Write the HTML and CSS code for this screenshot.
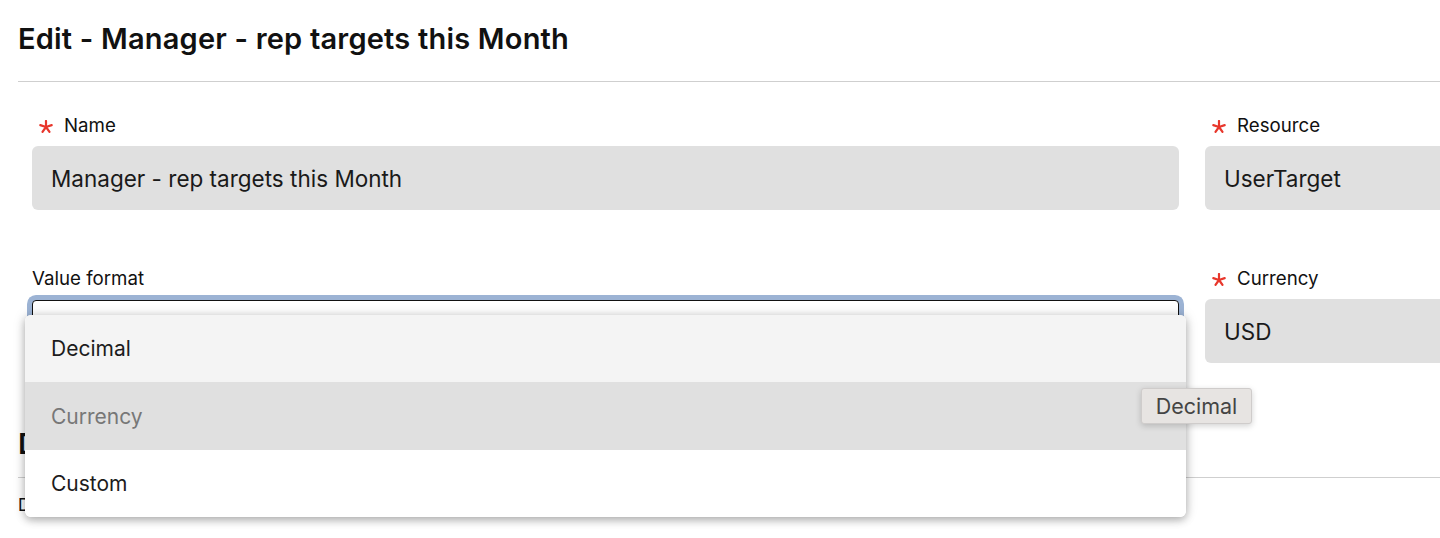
FILE: index.html
```html
<!DOCTYPE html>
<html lang="en">
<head>
<meta charset="utf-8">
<title>Edit - Manager - rep targets this Month</title>
<link rel="stylesheet" href="styles.css">
</head>
<body>
<div class="page">
  <h1 class="title">Edit - Manager - rep targets this Month</h1>
  <hr class="rule">
  <div class="form">
    <div class="row">
      <div class="field">
        <label class="label"><span class="req"><svg viewBox="0 0 14 14" width="14" height="14"><g stroke="#e8372c" stroke-width="2.2" stroke-linecap="round"><line x1="7" y1="7" x2="7" y2="1"/><line x1="7" y1="7" x2="12.7" y2="5.1"/><line x1="7" y1="7" x2="10.5" y2="11.9"/><line x1="7" y1="7" x2="3.5" y2="11.9"/><line x1="7" y1="7" x2="1.3" y2="5.1"/></g></svg></span>Name</label>
        <div class="input">Manager - rep targets this Month</div>
      </div>
      <div class="field">
        <label class="label"><span class="req"><svg viewBox="0 0 14 14" width="14" height="14"><g stroke="#e8372c" stroke-width="2.2" stroke-linecap="round"><line x1="7" y1="7" x2="7" y2="1"/><line x1="7" y1="7" x2="12.7" y2="5.1"/><line x1="7" y1="7" x2="10.5" y2="11.9"/><line x1="7" y1="7" x2="3.5" y2="11.9"/><line x1="7" y1="7" x2="1.3" y2="5.1"/></g></svg></span>Resource</label>
        <div class="input">UserTarget</div>
      </div>
    </div>
    <div class="row row-second">
      <div class="field">
        <label class="label plain">Value format</label>
        <div class="select-wrap">
          <div class="select"></div>
          <ul class="menu">
            <li class="option option-first">Decimal</li>
            <li class="option option-hover">Currency</li>
            <li class="option">Custom</li>
          </ul>
          <div class="tooltip">Decimal</div>
        </div>
      </div>
      <div class="field">
        <label class="label"><span class="req"><svg viewBox="0 0 14 14" width="14" height="14"><g stroke="#e8372c" stroke-width="2.2" stroke-linecap="round"><line x1="7" y1="7" x2="7" y2="1"/><line x1="7" y1="7" x2="12.7" y2="5.1"/><line x1="7" y1="7" x2="10.5" y2="11.9"/><line x1="7" y1="7" x2="3.5" y2="11.9"/><line x1="7" y1="7" x2="1.3" y2="5.1"/></g></svg></span>Currency</label>
        <div class="input">USD</div>
      </div>
    </div>
  </div>
  <h2 class="title section">Details</h2>
  <hr class="rule">
  <div class="desc">Description</div>
</div>
</body>
</html>
```
FILE: styles.css
```css
* { box-sizing: border-box; }
html, body {
  margin: 0;
  padding: 0;
  background: #fff;
  overflow: hidden;
  width: 1440px;
  height: 538px;
}
body {
  font-family: Inter, "Noto Sans", sans-serif;
  color: #111;
}
.page {
  padding: 21px 0 0 18px;
  width: 1440px;
}
.title {
  margin: 0;
  font-size: 29px;
  line-height: 35px;
  font-weight: 600;
  color: #111;
  letter-spacing: 0.2px;
}
.rule {
  margin: 25px 0 0 0;
  border: 0;
  border-top: 1px solid #cfcfcf;
  height: 0;
}
.form {
  padding-left: 14px;
  padding-top: 33px;
}
.row {
  display: grid;
  grid-template-columns: 1147px 1147px;
  column-gap: 26px;
}
.row-second {
  margin-top: 58px;
}
.field {
  display: flex;
  flex-direction: column;
  gap: 9px;
}
.label {
  display: flex;
  align-items: center;
  font-size: 18.7px;
  line-height: 22px;
  color: #111;
  padding-left: 7px;
  height: 22px;
}
.label.plain {
  padding-left: 0;
}
.req {
  display: flex;
  align-items: center;
  width: 25px;
  height: 22px;
  padding-top: 2px;
}
.input {
  height: 64px;
  background: #e0e0e0;
  border-radius: 6px;
  display: flex;
  align-items: center;
  padding-left: 19px;
  font-size: 22.5px;
  color: #1a1a1a;
}
.select-wrap {
  position: relative;
  height: 64px;
}
.select {
  height: 64px;
  margin-top: 1px;
  border: 1px solid #111;
  border-radius: 4px;
  background: #fff;
  box-shadow: 0 0 0 5px #9cb3d4;
}
.menu {
  position: absolute;
  left: -7px;
  top: 16px;
  width: 1161px;
  margin: 0;
  padding: 0;
  list-style: none;
  background: #fff;
  border-radius: 6px;
  overflow: hidden;
  box-shadow: 0 3px 8px rgba(0, 0, 0, 0.28), 0 0 14px rgba(0, 0, 0, 0.12);
  z-index: 2;
}
.option {
  height: 67px;
  display: flex;
  align-items: center;
  padding-left: 26px;
  font-size: 21px;
  color: #1c1c1c;
  background: #fff;
}
.option-first {
  background: #f4f4f4;
}
.option-hover {
  height: 68px;
  background: #e0e0e0;
  color: #777;
}
.tooltip {
  position: absolute;
  left: 1109px;
  top: 89px;
  width: 111px;
  height: 36px;
  background: #e7e4e2;
  border: 1px solid #cfcccb;
  border-radius: 3px;
  font-size: 21.5px;
  color: #444;
  display: flex;
  align-items: center;
  justify-content: center;
  box-shadow: 0 2px 6px rgba(0, 0, 0, 0.18);
  z-index: 3;
}
.section {
  margin-top: 63px;
}
.section + .rule {
  margin-top: 16px;
}
.desc {
  margin-top: 16px;
  font-size: 17px;
  line-height: 22px;
  color: #111;
}
```
